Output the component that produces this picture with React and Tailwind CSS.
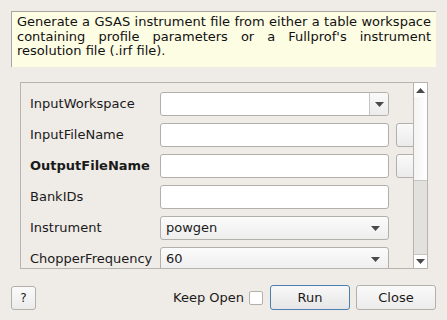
import React from "react";

const font = { fontFamily: '"DejaVu Sans", sans-serif' };

function Arrow() {
  return (
    <svg width="9" height="5" viewBox="0 0 9 5">
      <path d="M0 0 L9 0 L4.5 5 Z" fill="#4a4a4a" />
    </svg>
  );
}

function TextField() {
  return <div className="h-[24px] w-[229px] shrink-0 rounded-[3px] border border-[#b3afab] bg-white" />;
}

function Browse() {
  return <div className="ml-[7px] h-[24px] w-[30px] shrink-0 rounded-[3px] border border-[#b3afab] bg-gradient-to-b from-[#fafafa] to-[#ebebeb]" />;
}

function Combo({ value }) {
  return (
    <div className="flex h-[24px] w-[229px] shrink-0 items-center justify-between rounded-[3px] border border-[#b3afab] bg-gradient-to-b from-[#fbfbfb] to-[#eeeeee] pl-[5px] pr-[8px] text-[13px] text-[#1a1a1a]">
      <span>{value}</span>
      <Arrow />
    </div>
  );
}

function Row({ label, bold, children }) {
  return (
    <div className="flex h-[24px] shrink-0 items-center">
      <div className={`w-[130px] shrink-0 text-[13px] text-[#1a1a1a] ${bold ? "font-bold" : ""}`}>{label}</div>
      {children}
    </div>
  );
}

export default function App() {
  return (
    <div className="flex h-[320px] w-[447px] flex-col overflow-hidden bg-[#efebe7]" style={font}>
      <div className="ml-[11px] mt-[11px] h-[56px] w-[425px] border-l border-t border-[#a8a6a2] bg-[#fdfde4] px-[5px] pt-[3px] text-justify text-[13px] leading-[14.5px] text-[#111]">
        Generate a GSAS instrument file from either a table workspace containing profile parameters or a Fullprof's instrument resolution file (.irf file).
      </div>
      <div className="ml-[20px] mt-[15px] flex h-[187px] w-[408px] border border-[#b7b3af]">
        <div className="flex min-w-0 flex-1 flex-col gap-[7px] overflow-hidden pl-[9px] pt-[9px]">
          <Row label="InputWorkspace">
            <div className="flex h-[24px] w-[229px] shrink-0 items-stretch rounded-[3px] border border-[#b3afab] bg-white">
              <div className="flex-1" />
              <div className="flex w-[19px] items-center justify-center rounded-r-[3px] border-l border-[#c8c4c0] bg-gradient-to-b from-[#fafafa] to-[#ececec]">
                <Arrow />
              </div>
            </div>
          </Row>
          <Row label="InputFileName">
            <TextField />
            <Browse />
          </Row>
          <Row label="OutputFileName" bold>
            <TextField />
            <Browse />
          </Row>
          <Row label="BankIDs">
            <TextField />
          </Row>
          <Row label="Instrument">
            <Combo value="powgen" />
          </Row>
          <Row label="ChopperFrequency">
            <Combo value="60" />
          </Row>
        </div>
        <div className="flex w-[14px] shrink-0 flex-col border-l border-[#b7b3af]">
          <div className="flex h-[14px] items-center justify-center bg-white">
            <svg width="9" height="5" viewBox="0 0 9 5"><path d="M0 5 L9 5 L4.5 0 Z" fill="#4a4a4a" /></svg>
          </div>
          <div className="h-[84px] border-b border-[#c8c4c0] bg-gradient-to-r from-[#f4f4f4] to-[#ffffff]" />
          <div className="flex-1 bg-[#e3e1de]" />
          <div className="flex h-[14px] items-center justify-center border-t border-[#c8c4c0] bg-white">
            <Arrow />
          </div>
        </div>
      </div>
      <div className="mt-[16px] flex items-center px-[11px]">
        <div className="flex h-[24px] w-[25px] items-center justify-center rounded-[3px] border border-[#b3afab] bg-gradient-to-b from-[#fafafa] to-[#ebebeb] text-[12px] text-[#1a1a1a]">?</div>
        <div className="flex-1" />
        <span className="text-[13px] text-[#1a1a1a]">Keep Open</span>
        <div className="ml-[5px] h-[14px] w-[14px] rounded-[2px] border border-[#b3afab] bg-white" />
        <div className="ml-[7px] flex h-[25px] w-[80px] items-center justify-center rounded-[3px] border border-[#4a7fb0] bg-gradient-to-b from-[#f8f8f8] to-[#e6e6e6] text-[13px] text-[#1a1a1a]">Run</div>
        <div className="ml-[6px] flex h-[25px] w-[80px] items-center justify-center rounded-[3px] border border-[#b3afab] bg-gradient-to-b from-[#fafafa] to-[#ebebeb] text-[13px] text-[#1a1a1a]">Close</div>
      </div>
    </div>
  );
}
